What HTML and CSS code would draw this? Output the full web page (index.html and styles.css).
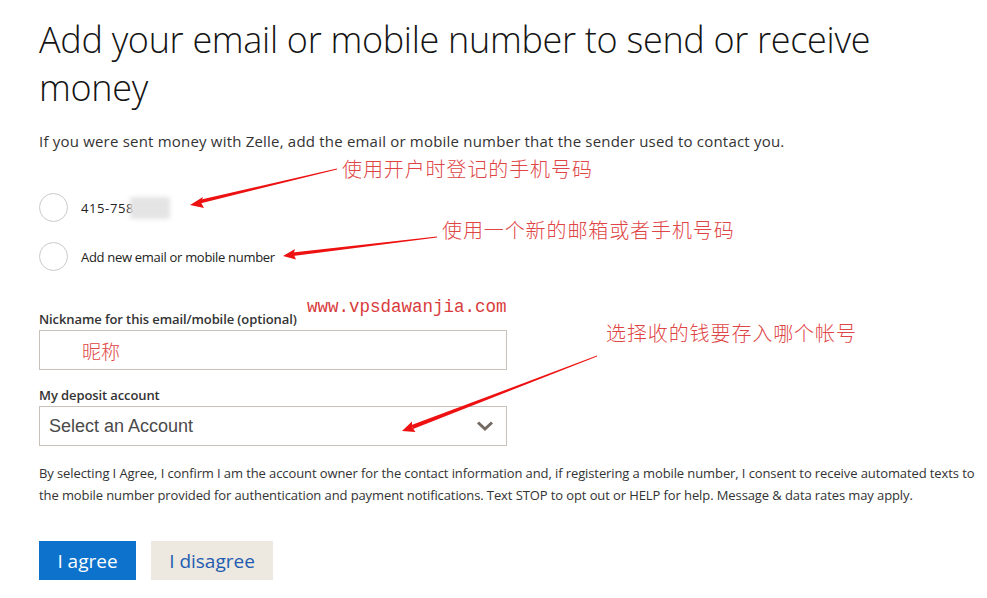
FILE: index.html
```html
<!DOCTYPE html>
<html>
<head>
<meta charset="utf-8">
<link rel="stylesheet" href="styles.css">
</head>
<body>
<div class="page">
  <h1 class="title">Add your email or mobile number to send or receive money</h1>
  <p class="intro">If you were sent money with Zelle, add the email or mobile number that the sender used to contact you.</p>

  <div class="options">
    <label class="option">
      <span class="radio"></span>
      <span class="opt-text phone">415-758</span>
      <span class="blur"></span>
    </label>
    <label class="option">
      <span class="radio"></span>
      <span class="opt-text">Add new email or mobile number</span>
    </label>
  </div>

  <div class="field nick">
    <div class="label-row">
      <span class="label">Nickname for this email/mobile (optional)</span>
      <span class="watermark">www.vpsdawanjia.com</span>
    </div>
    <div class="input"><span class="note-in">昵称</span></div>
  </div>

  <div class="field deposit">
    <div class="label">My deposit account</div>
    <div class="select">
      <span class="select-text">Select an Account</span>
      <svg class="chev" width="18" height="12" viewBox="0 0 18 12"><path d="M2 2.5 L9 9 L16 2.5" fill="none" stroke="#756a62" stroke-width="3"/></svg>
    </div>
  </div>

  <p class="legal">By selecting I Agree, I confirm I am the account owner for the contact information and, if registering a mobile number, I consent to receive automated texts to the mobile number provided for authentication and payment notifications. Text STOP to opt out or HELP for help. Message &amp; data rates may apply.</p>

  <div class="buttons">
    <button class="btn primary">I agree</button>
    <button class="btn secondary">I disagree</button>
  </div>

  <span class="note n1">使用开户时登记的手机号码</span>
  <span class="note n2">使用一个新的邮箱或者手机号码</span>
  <span class="note n3">选择收的钱要存入哪个帐号</span>

  <svg class="arrows" width="987" height="598" viewBox="0 0 987 598">
    <g fill="#ee1111">
      <polygon points="337,168.6 337,169.4 200,203.5 199,200"/>
      <polygon points="190,205 203,197 201,202.5 204,208"/>
      <polygon points="437,236.6 437,237.4 293,256 292.5,252.5"/>
      <polygon points="283,256 295,249 293.5,254 296,259.5"/>
      <polygon points="597,355.6 597,356.4 413,429 411.5,425"/>
      <polygon points="402,431 412,421.5 412,427 415.5,432"/>
    </g>
  </svg>
</div>
</body>
</html>
```

FILE: styles.css
```css
* { box-sizing: border-box; }
html, body { margin: 0; padding: 0; background: #fff; }
body {
  font-family: "Open Sans", "Noto Sans", sans-serif;
  color: #1a1a1a;
  width: 987px;
  height: 598px;
  overflow: hidden;
}
.page {
  position: relative;
  padding: 16px 0 0 39px;
  height: 598px;
}
.title {
  margin: 0;
  font-weight: 300;
  font-size: 36px;
  line-height: 48px;
  letter-spacing: -0.3px;
  color: #141414;
  width: 900px;
}
.intro {
  margin: 18px 0 0;
  font-size: 15px;
  line-height: 22px;
  color: #333;
  letter-spacing: 0.2px;
}
.options {
  margin-top: 41px;
  display: flex;
  flex-direction: column;
  gap: 20px;
}
.option {
  display: flex;
  align-items: center;
  height: 29px;
}
.radio {
  width: 29px;
  height: 29px;
  border: 1px solid #c9c9c9;
  border-radius: 50%;
  flex: none;
}
.opt-text {
  margin-left: 13px;
  font-size: 13px;
  color: #222;
  letter-spacing: -0.3px;
}
.phone { letter-spacing: 0.6px; }
.blur {
  width: 40px;
  height: 22px;
  background: #e4e4e4;
  margin-left: -4px;
  filter: blur(2px);
  border-radius: 2px;
}
.field { width: 468px; }
.nick { margin-top: 39px; }
.deposit { margin-top: 16px; }
.label-row { display: flex; align-items: flex-end; position: relative; }
.label {
  font-size: 13px;
  font-weight: 600;
  color: #333;
  line-height: 18px;
  letter-spacing: -0.1px;
}
.watermark {
  position: absolute;
  left: 268px;
  top: -13px;
  font-family: "Liberation Mono", "DejaVu Sans Mono", monospace;
  font-size: 17.5px;
  color: #d93b3b;
  white-space: nowrap;
}
.input, .select {
  margin-top: 2px;
  height: 40px;
  border: 1px solid #c8c1ba;
  background: #fff;
  display: flex;
  align-items: center;
}
.note-in {
  margin-left: 42px;
  font-family: "Noto Sans CJK SC", sans-serif;
  font-weight: 300;
  font-size: 19px;
  color: #e04444;
}
.select { justify-content: space-between; padding: 0 12px 0 9px; }
.select-text {
  font-family: "Liberation Sans", Arial, sans-serif;
  font-size: 18px;
  color: #4a4a4a;
}
.legal {
  margin: 16px 0 0;
  font-size: 13px;
  line-height: 22px;
  color: #333;
  width: 945px;
  letter-spacing: -0.1px;
}
.buttons {
  margin-top: 35px;
  display: flex;
  gap: 15px;
}
.btn {
  height: 39px;
  border: 0;
  font-family: "Open Sans", sans-serif;
  font-size: 19px;
  padding: 0;
  white-space: nowrap;
  cursor: pointer;
}
.primary { background: #0c72cc; color: #fff; width: 97px; }
.secondary { background: #ede8e0; color: #1f5cb0; width: 122px; }
.note {
  position: absolute;
  font-family: "Noto Sans CJK SC", sans-serif;
  font-weight: 300;
  font-size: 20px;
  color: #e04545;
  white-space: nowrap;
  line-height: 24px;
  letter-spacing: 0.9px;
}
.n1 { left: 342px; top: 157px; }
.n2 { left: 442px; top: 218px; }
.n3 { left: 606px; top: 321px; }
.arrows { position: absolute; left: 0; top: 0; pointer-events: none; }
```
